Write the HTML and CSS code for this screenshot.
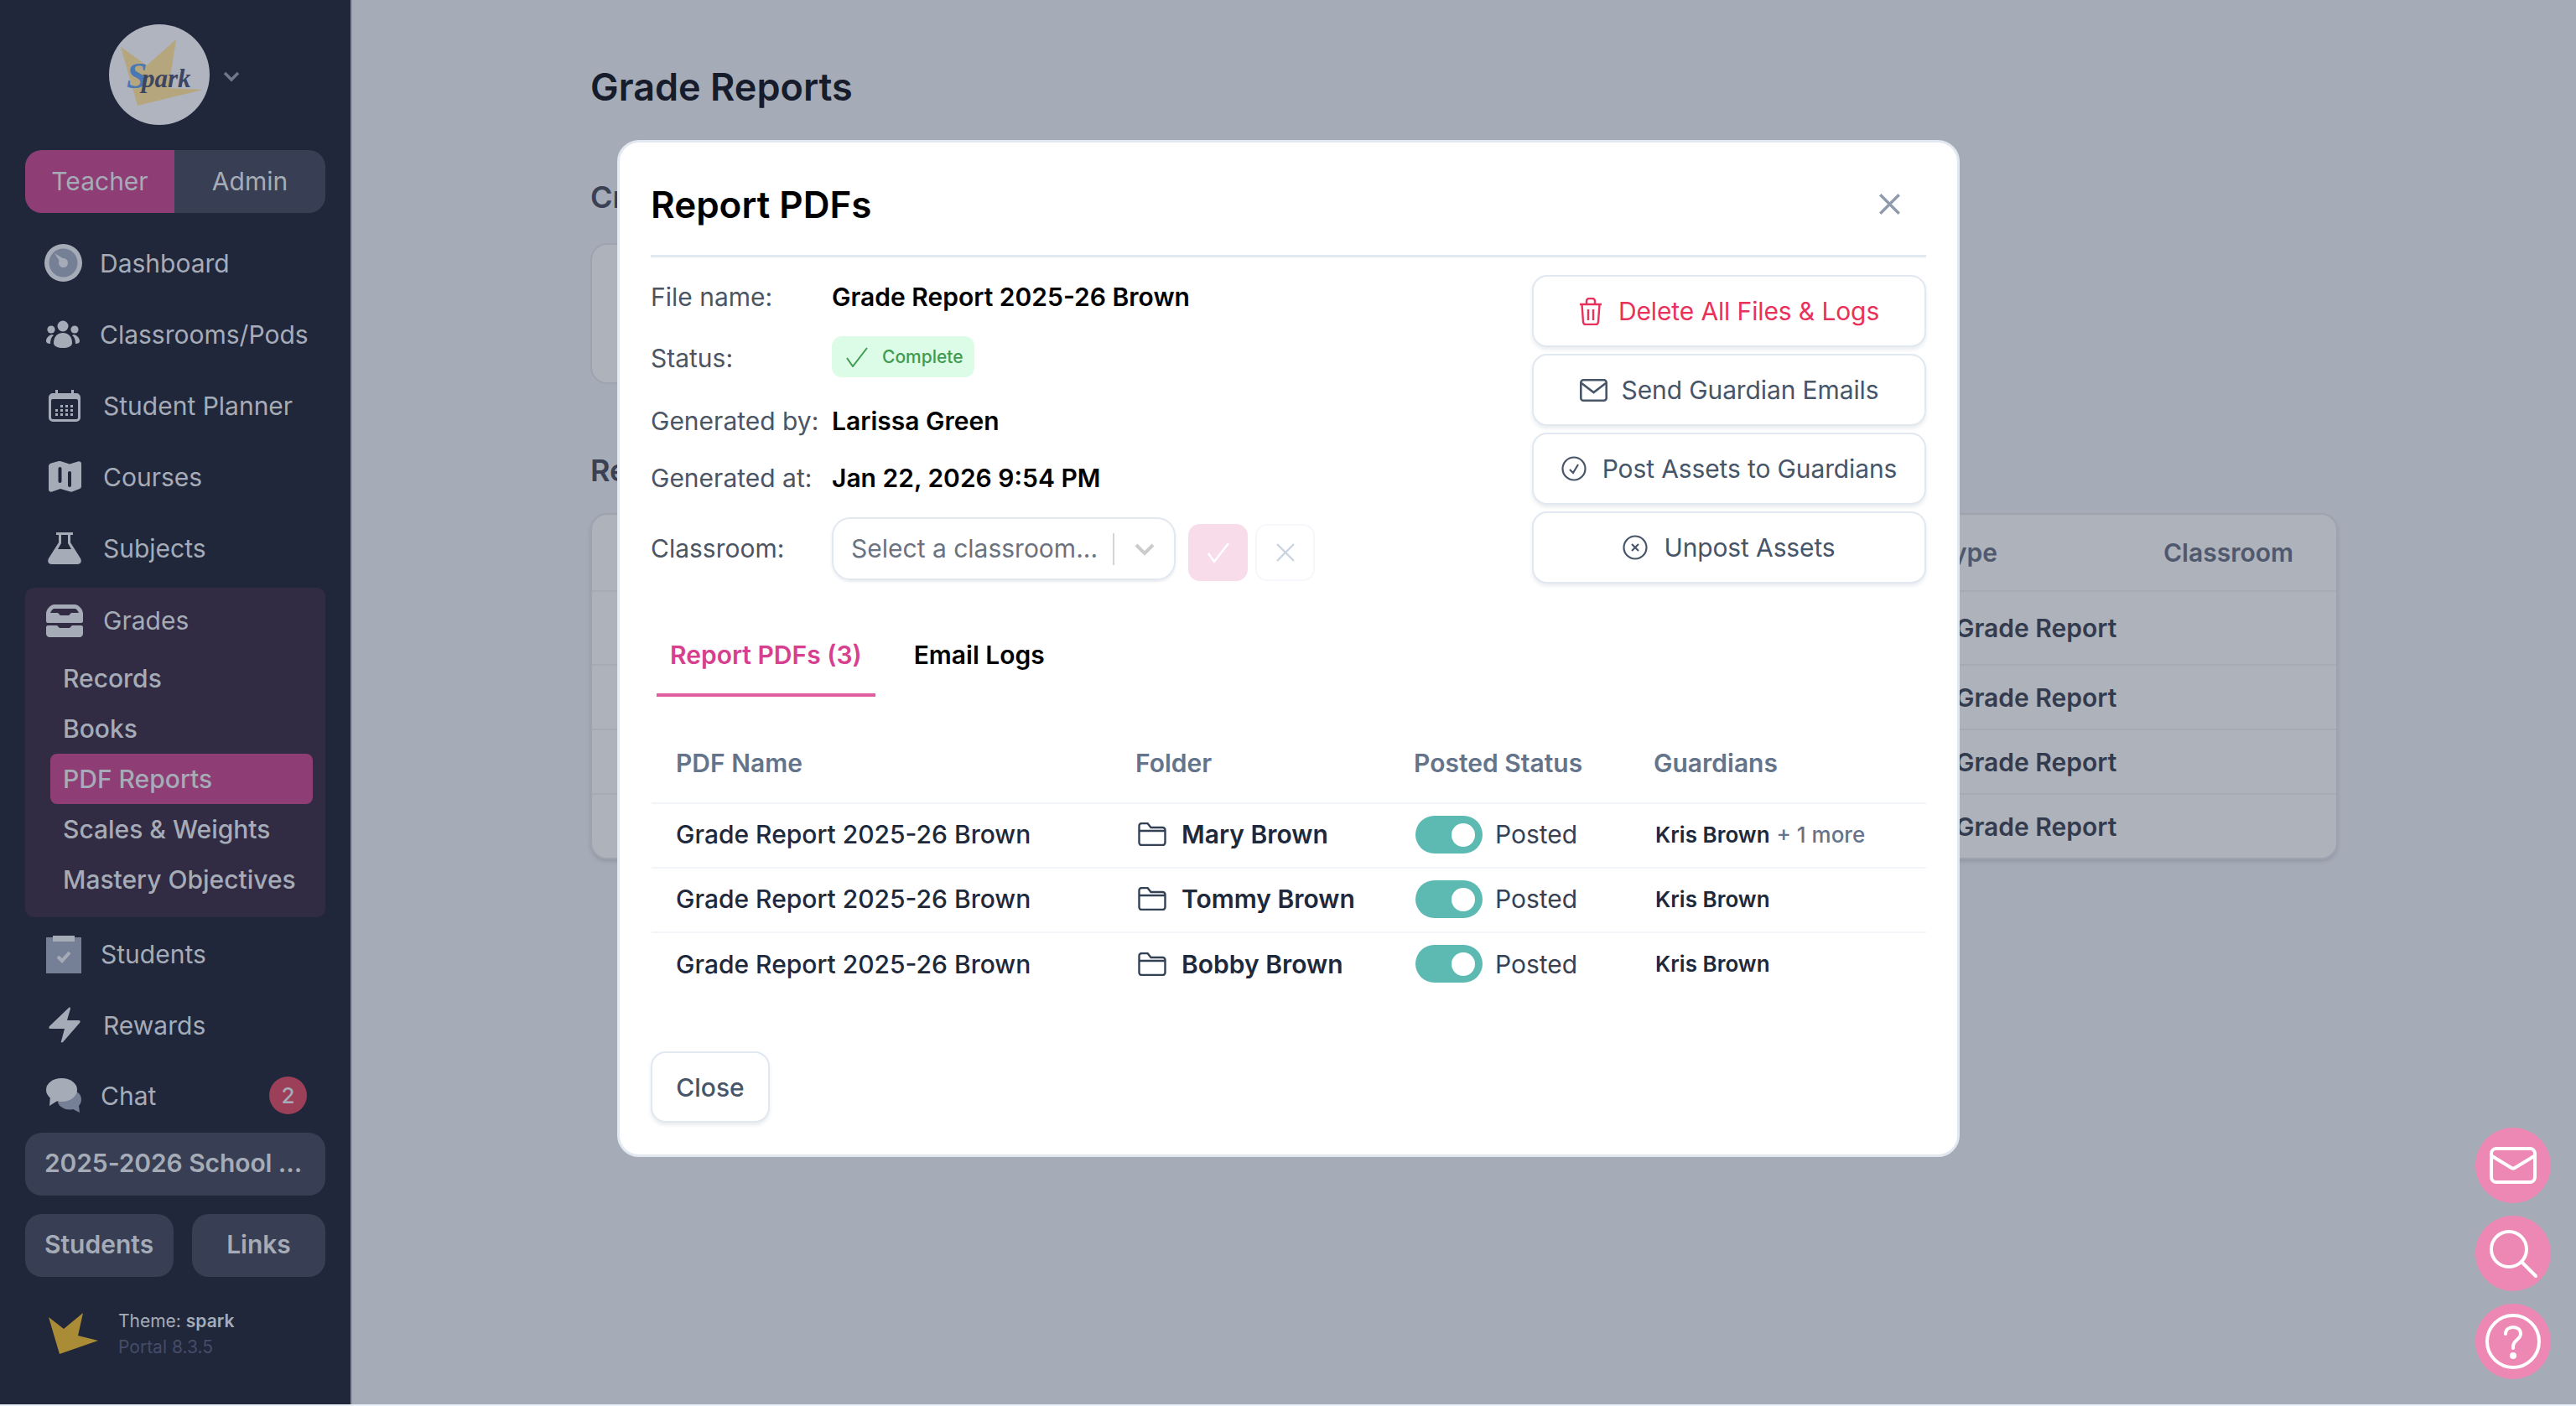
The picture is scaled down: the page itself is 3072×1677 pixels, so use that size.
FILE: index.html
```html
<!DOCTYPE html>
<html lang="en">
<head>
<meta charset="UTF-8">
<meta name="viewport" content="width=device-width, initial-scale=1.0">
<title>Grade Reports</title>
<link rel="stylesheet" href="styles.css">
</head>
<body>

<div class="app">

<!-- Sidebar -->
<aside class="sidebar">
  <div class="brand">
    <svg class="brand-logo" viewBox="0 0 120 120">
      <circle cx="60" cy="60" r="60" fill="#afb4bf"/>
      <polygon points="14,27 45,49 80,18 71,76 112,78 34,97" fill="#b5a67d"/>
      <text x="21" y="76" class="logo-s">S</text>
      <text x="39" y="75" class="logo-text">park</text>
    </svg>
    <svg class="brand-caret" viewBox="0 0 20 14"><path d="M2 3l8 8 8-8" fill="none" stroke="#6f788d" stroke-width="3.4"/></svg>
  </div>

  <div class="role-switch">
    <div class="role role-active">Teacher</div>
    <div class="role">Admin</div>
  </div>

  <nav class="nav">
    <a class="nav-item">
      <svg class="ico ico-dash" viewBox="0 0 45 45"><circle cx="22.500" cy="22.500" r="22.500" fill="#a6acb7"/><circle cx="22.500" cy="22.500" r="17" fill="#757f95"/><circle cx="22.500" cy="22.500" r="5.500" fill="#a6acb7"/><path d="M12 11l13 8-4 6z" fill="#a6acb7"/></svg>
      <span>Dashboard</span>
    </a>
    <a class="nav-item">
      <svg class="ico ico-users" viewBox="0 0 40 33" fill="#a6acb7"><circle cx="20" cy="7" r="6.500"/><circle cx="6" cy="11" r="4.600"/><circle cx="34" cy="11" r="4.600"/><path d="M9 27c0-8 5-12 11-12s11 4 11 12c0 4-5 6-11 6S9 31 9 27z"/><path d="M7 17C3 18 0 21 0 25c0 2 2 3 5 3 0-4 1-8 4-10zM33 17c4 1 7 4 7 8 0 2-2 3-5 3 0-4-1-8-4-10z"/></svg>
      <span>Classrooms/Pods</span>
    </a>
    <a class="nav-item">
      <svg class="ico ico-cal" viewBox="0 0 38 38"><path d="M8 0h3v4h16V0h3v4h3a5 5 0 0 1 5 5v24a5 5 0 0 1-5 5H5a5 5 0 0 1-5-5V9a5 5 0 0 1 5-5h3z" fill="#a6acb7"/><rect x="3" y="11" width="32" height="24" rx="2" fill="#20273b"/><g fill="#a6acb7"><rect x="8" y="23" width="3" height="3"/><rect x="14" y="23" width="3" height="3"/><rect x="20" y="23" width="3" height="3"/><rect x="26" y="23" width="3" height="3"/><rect x="8" y="28" width="3" height="3"/><rect x="14" y="28" width="3" height="3"/><rect x="20" y="28" width="3" height="3"/><rect x="26" y="28" width="3" height="3"/><rect x="20" y="18" width="3" height="3"/><rect x="26" y="18" width="3" height="3"/><rect x="14" y="18" width="3" height="3"/></g></svg>
      <span>Student Planner</span>
    </a>
    <a class="nav-item">
      <svg class="ico ico-map" viewBox="0 0 39 37"><path d="M3 2.500L12 0c.7-.2 1.300-.2 2 0l11 3.500L35 .5c2-.5 4 .5 4 2.500v27c0 1.500-1 2.500-2 3l-9 3.500c-.7.200-1.300.200-2 0L14 33 4 36.500c-2 .5-4-.5-4-2.500V6c0-1.500 1-3 3-3.500z" fill="#a6acb7"/><rect x="11.500" y="7" width="4" height="19" rx="2" fill="#20273b"/><rect x="23" y="12" width="4" height="19" rx="2" fill="#20273b"/></svg>
      <span>Courses</span>
    </a>
    <a class="nav-item">
      <svg class="ico ico-flask" viewBox="0 0 40 38" fill="#a6acb7"><path d="M10 0h20v3h-3v9l12 19c2 4 0 7-4 7H5c-4 0-6-3-4-7l12-19V3h-3z"/><path d="M16 3h8v10l4 7H12l4-7z" fill="#20273b"/></svg>
      <span>Subjects</span>
    </a>

    <div class="nav-group">
      <a class="nav-item nav-item-head">
        <svg class="ico ico-inbox" viewBox="0 0 44 39" fill="#a6acb7"><path d="M10 0h24c5 0 10 6 10 11v9c0 1-1 2-2 2H2c-1 0-2-1-2-2v-9C0 6 5 0 10 0zM9 5c-2 1-3 3-4 5h9l3 3h10l3-3h9c-1-2-2-4-4-5z" fill-rule="evenodd"/><path d="M2 25h11l3 3h12l3-3h11c1 0 2 1 2 2v8c0 2-2 4-4 4H4c-2 0-4-2-4-4v-8c0-1 1-2 2-2z"/></svg>
        <span>Grades</span>
      </a>
      <a class="sub-item">Records</a>
      <a class="sub-item">Books</a>
      <a class="sub-item sub-active">PDF Reports</a>
      <a class="sub-item">Scales &amp; Weights</a>
      <a class="sub-item">Mastery Objectives</a>
    </div>

    <a class="nav-item nav-after">
      <svg class="ico ico-clip" viewBox="0 0 42 45"><rect y="2" width="42" height="43" fill="#757f95"/><rect x="8" width="26" height="7" fill="#a6acb7"/><path d="M14 25l5 5 9-10" fill="none" stroke="#a6acb7" stroke-width="4"/></svg>
      <span>Students</span>
    </a>
    <a class="nav-item">
      <svg class="ico ico-bolt" viewBox="0 0 38 43" fill="#a6acb7"><path d="M24 1c1-1 2 0 2 1l-4 14h14c2 0 2 2 1 3L17 42c-1 1-3 0-2-1l4-15H2c-2 0-2-2-1-3z"/></svg>
      <span>Rewards</span>
    </a>
    <a class="nav-item nav-last">
      <svg class="ico ico-chat" viewBox="0 0 42 42"><path d="M22 14c10-2 20 3 20 11 0 3-1 6-3 8l1 8-8-4c-8 2-16-2-18-8z" fill="#757f95"/><ellipse cx="18.500" cy="14" rx="18.500" ry="14" fill="#a6acb7"/><path d="M5 21l-1 12 11-7z" fill="#a6acb7"/></svg>
      <span>Chat</span>
      <b class="badge">2</b>
    </a>
  </nav>

  <div class="side-btn side-btn-wide">2025-2026 School ...</div>
  <div class="side-btns">
    <div class="side-btn side-btn-students">Students</div>
    <div class="side-btn side-btn-links">Links</div>
  </div>

  <div class="theme">
    <svg class="theme-star" viewBox="0 0 59 49"><polygon points="0,5 18,19 41,0 35,27 59,33 13,49" fill="#ab8c36"/></svg>
    <div class="theme-text">
      <div class="theme-name">Theme: <b>spark</b></div>
      <div class="theme-ver">Portal 8.3.5</div>
    </div>
  </div>
</aside>

<!-- Page behind the dialog -->
<main class="main">
  <h1 class="page-title">Grade Reports</h1>
  <h2 class="sec-title sec-create">Create Report</h2>
  <div class="back-card"></div>
  <h2 class="sec-title sec-reports">Reports</h2>
  <div class="back-table">
    <div class="back-row back-head"><span class="back-type">Type</span><span class="back-class">Classroom</span></div>
    <div class="back-row back-r1"><span class="back-type">Grade Report</span></div>
    <div class="back-row back-r2"><span class="back-type">Grade Report</span></div>
    <div class="back-row back-r3"><span class="back-type">Grade Report</span></div>
    <div class="back-row back-r4"><span class="back-type">Grade Report</span></div>
  </div>
</main>

</div>

<!-- Dialog -->
<div class="modal">
  <header class="modal-head">
    <h2>Report PDFs</h2>
    <svg class="modal-x" viewBox="0 0 24 24"><path d="M2 2l20 20M22 2L2 22" stroke="#8f9bad" stroke-width="3" fill="none"/></svg>
  </header>

  <div class="modal-top">
    <div class="info">
      <div class="info-label">File name:</div>
      <div class="info-val">Grade Report 2025-26 Brown</div>
      <div class="info-label">Status:</div>
      <div class="info-val">
        <span class="pill">
          <svg viewBox="0 0 26 24"><path d="M1 13l7 10L25 1" fill="none" stroke="#3f9b4f" stroke-width="2"/></svg>
          Complete
        </span>
      </div>
      <div class="info-label">Generated by:</div>
      <div class="info-val">Larissa Green</div>
      <div class="info-label">Generated at:</div>
      <div class="info-val">Jan 22, 2026 9:54 PM</div>
      <div class="info-label">Classroom:</div>
      <div class="info-val class-pick">
        <div class="select">
          <span class="select-ph">Select a classroom...</span>
          <i class="select-sep"></i>
          <svg class="select-caret" viewBox="0 0 24 16"><path d="M2 3l10 10L22 3" fill="none" stroke="#cccccc" stroke-width="4"/></svg>
        </div>
        <div class="mini mini-ok"><svg viewBox="0 0 26 24"><path d="M1 13l7 10L25 1" fill="none" stroke="#fff" stroke-width="2.400"/></svg></div>
        <div class="mini mini-no"><svg viewBox="0 0 24 24"><path d="M2 2l20 20M22 2L2 22" fill="none" stroke="#cbd5e1" stroke-width="2.400"/></svg></div>
      </div>
    </div>

    <div class="actions">
      <button class="btn btn-danger">
        <svg class="btn-ico ico-trash" viewBox="0 0 28 33" fill="none" stroke="#e8325c" stroke-width="2.400"><path d="M1 8h26M9 8V4a3 3 0 0 1 3-3h4a3 3 0 0 1 3 3v4M3.500 8l1.500 21a3 3 0 0 0 3 3h12a3 3 0 0 0 3-3l1.500-21M11 14v13M17 14v13"/></svg>
        Delete All Files &amp; Logs
      </button>
      <button class="btn">
        <svg class="btn-ico ico-mail" viewBox="0 0 33 27" fill="none" stroke="#475569" stroke-width="2.600"><rect x="1.300" y="1.300" width="30.400" height="24.400" rx="3"/><path d="M2 5l14.500 11L31 5"/></svg>
        Send Guardian Emails
      </button>
      <button class="btn">
        <svg class="btn-ico ico-circ" viewBox="0 0 30 30" fill="none" stroke="#475569" stroke-width="2.200"><circle cx="15" cy="15" r="13.500"/><path d="M10 16l4 4 6-10"/></svg>
        Post Assets to Guardians
      </button>
      <button class="btn">
        <svg class="btn-ico ico-circ" viewBox="0 0 30 30" fill="none" stroke="#475569" stroke-width="2.200"><circle cx="15" cy="15" r="13.500"/><path d="M11 11l8 8M19 11l-8 8"/></svg>
        Unpost Assets
      </button>
    </div>
  </div>

  <ul class="tabs">
    <li class="tab tab-active">Report PDFs (3)</li>
    <li class="tab">Email Logs</li>
  </ul>

  <table class="pdf-table">
    <colgroup><col class="c1"><col class="c2"><col class="c3"><col class="c4"></colgroup>
    <thead>
      <tr><th>PDF Name</th><th>Folder</th><th>Posted Status</th><th>Guardians</th></tr>
    </thead>
    <tbody id="pdfRows"></tbody>
  </table>

  <button class="btn btn-close">Close</button>
</div>

<!-- Floating helpers -->
<div class="fabs">
  <div class="fab"><svg viewBox="0 0 56 44" width="56" height="44" fill="none" stroke="#fff" stroke-width="4"><rect x="2" y="2" width="52" height="40" rx="6"/><path d="M3 11l23 14c1.200.7 2.800.7 4 0l23-14" stroke-linecap="round"/></svg></div>
  <div class="fab"><svg viewBox="0 0 60 60" width="60" height="60" fill="none" stroke="#fff" stroke-width="4" stroke-linecap="round"><circle cx="25" cy="25" r="21"/><path d="M40 40l17 17"/></svg></div>
  <div class="fab"><svg viewBox="0 0 66 66" width="66" height="66" fill="none" stroke="#fff" stroke-width="4" stroke-linecap="round"><circle cx="33" cy="33" r="31"/><path d="M24 24c0-5 4-8 9-8s9 3 9 8c0 7-9 7-9 15v2"/><circle cx="33" cy="50" r="2" fill="#fff"/></svg></div>
</div>

<script>
const pdfs=[
{name:"Grade Report 2025-26 Brown",folder:"Mary Brown",guardian:"Kris Brown",more:"+ 1 more"},
{name:"Grade Report 2025-26 Brown",folder:"Tommy Brown",guardian:"Kris Brown",more:""},
{name:"Grade Report 2025-26 Brown",folder:"Bobby Brown",guardian:"Kris Brown",more:""}
];

const rows=document.getElementById("pdfRows");
pdfs.forEach(p=>{
rows.innerHTML+=`
<tr>
<td class="pdf-name">${p.name}</td>
<td><div class="folder"><svg viewBox="0 0 34 28" fill="none" stroke="#334155" stroke-width="2.400"><path d="M1.500 24V4a3 3 0 0 1 3-3h7l4 5h14a3 3 0 0 1 3 3v15a3 3 0 0 1-3 3h-25a3 3 0 0 1-3-3zM1.500 10h31"/></svg>${p.folder}</div></td>
<td><div class="posted"><span class="switch"><i></i></span>Posted</div></td>
<td class="guardian">${p.guardian}<span class="more">${p.more}</span></td>
</tr>`;
});
</script>

</body>
</html>
```

FILE: styles.css
```css
*{
box-sizing:border-box;
}

body{
margin:0;
width:3072px;
height:1677px;
overflow:hidden;
font-family:Inter, "Noto Sans", sans-serif;
font-size:30px;
background:#e9eff7;
color:#1f2937;
}

.app{
display:flex;
height:1675px;
background:#a6acb7;
}

/* Sidebar */
.sidebar{
width:420px;
flex:none;
background:#20273b;
border-right:2px solid #8b909e;
color:#a6acb7;
padding:29px 30px 0 30px;
}

.brand{
display:flex;
align-items:center;
margin-left:100px;
height:120px;
}

.brand-logo{
width:120px;
height:120px;
}

.logo-s{
font-family:"Liberation Serif", serif;
font-style:italic;
font-weight:700;
font-size:44px;
fill:#4a78b5;
}

.logo-text{
font-family:"Liberation Serif", serif;
font-style:italic;
font-weight:700;
font-size:31px;
fill:#3d4560;
}

.brand-caret{
width:20px;
height:14px;
margin-left:16px;
margin-top:4px;
}

.role-switch{
display:flex;
height:75px;
margin-top:30px;
border-radius:20px;
overflow:hidden;
background:#383e53;
}

.role{
display:flex;
align-items:center;
justify-content:center;
flex:1;
padding-bottom:2px;
}

.role-active{
flex:none;
width:178px;
background:#8e3d75;
}

.nav{
margin-top:17px;
display:block;
}

.nav-item{
display:flex;
align-items:center;
height:85px;
padding-left:27px;
position:relative;
}

.ico{
flex:none;
margin-right:27px;
}

.nav-item span{
white-space:nowrap;
}

.ico-dash{width:45px;height:45px;margin-left:-4px;margin-right:21px;}
.ico-users{width:40px;height:33px;margin-left:-2px;margin-right:24px;}
.ico-cal{width:38px;height:38px;margin-left:1px;margin-right:27px;}
.ico-map{width:39px;height:37px;margin-left:1px;margin-right:26px;}
.ico-flask{width:40px;height:38px;margin-right:26px;}
.ico-inbox{width:44px;height:39px;margin-left:-2px;margin-right:24px;}
.ico-clip{width:42px;height:45px;margin-left:-2px;margin-right:23px;}
.ico-bolt{width:38px;height:43px;margin-left:1px;margin-right:27px;}
.ico-chat{width:42px;height:42px;margin-left:-2px;margin-right:23px;}

.nav-group{
background:#312b43;
border-radius:10px;
margin-top:5px;
padding-bottom:15px;
}

.nav-item-head{
height:78px;
}

.sub-item{
display:flex;
align-items:center;
height:60px;
margin:0 15px 0 30px;
padding-left:15px;
border-radius:8px;
font-weight:500;
}

.sub-active{
background:#8e3d75;
}

.nav-after{
margin-top:2px;
height:84px;
}

.nav-last{
height:86px;
padding-bottom:3px;
}

.badge{
position:absolute;
left:291px;
top:19px;
width:45px;
height:45px;
border-radius:50%;
background:#9c3f58;
font-size:26px;
font-weight:500;
text-align:center;
line-height:45px;
}

.side-btn{
background:#383e53;
border-radius:20px;
height:75px;
display:flex;
align-items:center;
font-weight:600;
padding-bottom:3px;
}

.side-btn-wide{
padding-left:23px;
white-space:nowrap;
letter-spacing:-0.1px;
}

.side-btns{
display:flex;
justify-content:space-between;
margin-top:22px;
}

.side-btn-students{
width:177px;
padding-left:23px;
}

.side-btn-links{
width:159px;
justify-content:center;
}

.theme{
display:flex;
margin:43px 0 0 28px;
font-size:21px;
line-height:31px;
}

.theme-star{
width:59px;
height:49px;
margin-right:24px;
flex:none;
}

.theme-text{
margin-top:-6px;
}

.theme-name b{
font-weight:600;
}

.theme-ver{
color:#454c67;
}

/* Page behind the dialog */
.main{
flex:1;
padding:0 284px 0 284px;
color:#161c2c;
}

.page-title{
margin:0;
font-size:45px;
font-weight:600;
line-height:56px;
padding-top:76px;
}

.sec-title{
margin:0;
font-size:36px;
font-weight:600;
line-height:44px;
color:#3a4154;
}

.sec-create{
margin-top:81px;
}

.back-card{
width:1000px;
height:168px;
margin-top:33px;
border-radius:20px;
border:2px solid #9da3af;
background:#aeb2bb;
}

.sec-reports{
margin-top:81px;
}

.back-table{
margin-top:29px;
height:413px;
border-radius:20px;
border:2px solid #9da3af;
background:#aeb2bb;
box-shadow:0 3px 4px rgba(60,70,90,0.18);
font-weight:600;
color:#333b4f;
}

.back-row{
display:flex;
align-items:center;
border-bottom:2px solid #a6aab4;
}

.back-row:last-child{
border-bottom:0;
}

.back-head{height:92px;color:#4f586c;}
.back-r1{height:88px;}
.back-r2{height:77px;}
.back-r3{height:77px;}
.back-r4{height:75px;}

.back-type{
margin-left:1626px;
}

.back-head .back-type{
margin-left:1604px;
}

.back-class{
position:absolute;
left:2580px;
}

/* Dialog */
.modal{
position:absolute;
left:736px;
top:167px;
width:1601px;
height:1213px;
background:#fff;
border:3px solid #e2e8f0;
border-radius:26px;
padding:0 37px;
color:#000;
}

.modal-head{
display:flex;
align-items:center;
justify-content:space-between;
height:137px;
padding:13px 30px 0 0;
border-bottom:3px solid #e2e8f0;
}

.modal-head h2{
margin:0;
font-size:44px;
font-weight:600;
}

.modal-x{
width:27px;
height:27px;
}

.modal-top{
display:flex;
justify-content:space-between;
margin-top:21px;
}

.info{
display:grid;
grid-template-columns:216px 1fr;
grid-template-rows:54px 92px 58px 78px 90px;
align-items:center;
}

.info-label{
color:#4b5563;
padding-bottom:2px;
}

.info-val{
font-weight:600;
padding-bottom:2px;
}

.pill{
display:flex;
align-items:center;
width:170px;
height:49px;
margin-bottom:3px;
padding-left:17px;
border-radius:12px;
background:#dcfce7;
color:#3f9b4f;
font-size:21px;
font-weight:500;
}

.pill svg{
width:26px;
height:24px;
margin-right:17px;
}

.class-pick{
display:flex;
align-items:flex-start;
font-weight:400;
padding-bottom:0;
}

.select{
display:flex;
align-items:center;
width:410px;
height:75px;
padding-left:21px;
border:2px solid #e2e8f0;
border-radius:22px;
box-shadow:0 2px 3px rgba(100,116,139,0.15);
color:#6b7280;
}

.select-ph{
width:312px;
white-space:nowrap;
padding-bottom:2px;
}

.select-sep{
width:2px;
height:38px;
background:#d4d4d4;
}

.select-caret{
width:24px;
height:16px;
margin-left:24px;
}

.mini{
display:flex;
align-items:center;
justify-content:center;
width:71px;
height:68px;
margin:8px 0 0 15px;
border-radius:14px;
}

.mini-ok{
background:#f9dcea;
}

.mini-no{
margin-left:9px;
border:2px solid #f5f7fa;
}

.mini-ok svg{
width:26px;
height:30px;
}

.mini-no svg{
width:24px;
height:24px;
}

.actions{
display:flex;
flex-direction:column;
gap:8px;
width:470px;
}

.btn{
display:flex;
align-items:center;
justify-content:center;
width:100%;
height:86px;
background:#fff;
border:2px solid #e2e8f0;
border-radius:18px;
box-shadow:0 3px 4px rgba(100,116,139,0.14);
color:#475569;
font-family:Inter, "Noto Sans", sans-serif;
font-size:30px;
font-weight:400;
letter-spacing:-0.12px;
padding:0;
}

.btn-danger{
color:#e8325c;
}

.btn-ico{
flex:none;
}

.ico-trash{width:28px;height:33px;margin-right:19px;}
.ico-mail{width:33px;height:27px;margin-right:17px;}
.ico-circ{width:30px;height:30px;margin-right:19px;}

/* Tabs */
.tabs{
display:flex;
list-style:none;
margin:32px 0 0 7px;
padding:0;
gap:30px;
font-weight:600;
}

.tab{
padding:30px 16px 27px 16px;
line-height:38px;
border-bottom:4px solid transparent;
}

.tab-active{
color:#d6408f;
border-bottom-color:#e05ea0;
}

/* Table */
.pdf-table{
width:1520px;
margin:35px 0 0 1px;
border-collapse:collapse;
table-layout:fixed;
}

.c1{width:548px;}
.c2{width:332px;}
.c3{width:286px;}
.c4{width:354px;}

.pdf-table th{
height:92px;
text-align:left;
font-weight:600;
color:#64748b;
padding:0 0 3px 29px;
border-bottom:2px solid #f1f5f9;
}

.pdf-table td{
height:77px;
padding:0 0 3px 29px;
color:#1e293b;
border-bottom:2px solid #f1f5f9;
white-space:nowrap;
}

.pdf-table td.pdf-name{
font-weight:500;
}

.pdf-table tr:last-child td{
border-bottom:0;
}

.folder{
display:flex;
align-items:center;
font-weight:600;
}

.folder svg{
width:34px;
height:28px;
margin:0 18px 0 3px;
}

.posted{
display:flex;
align-items:center;
color:#374151;
}

.switch{
display:block;
position:relative;
width:80px;
height:45px;
margin:0 15px 0 2px;
border-radius:23px;
background:#5cbab2;
}

.switch i{
position:absolute;
left:43px;
top:9px;
width:28px;
height:28px;
border-radius:50%;
background:#fff;
}

.pdf-table td.guardian{
font-size:26px;
font-weight:600;
padding-left:31px;
}

.more{
margin-left:8px;
color:#64748b;
font-weight:500;
}

.btn-close{
width:142px;
height:85px;
margin-top:65px;
font-weight:500;
letter-spacing:0;
}

/* Floating helpers */
.fabs{
position:fixed;
right:30px;
bottom:32px;
display:flex;
flex-direction:column;
gap:15px;
}

.fab{
display:flex;
align-items:center;
justify-content:center;
width:90px;
height:90px;
border-radius:50%;
background:#ec88b3;
}
```
